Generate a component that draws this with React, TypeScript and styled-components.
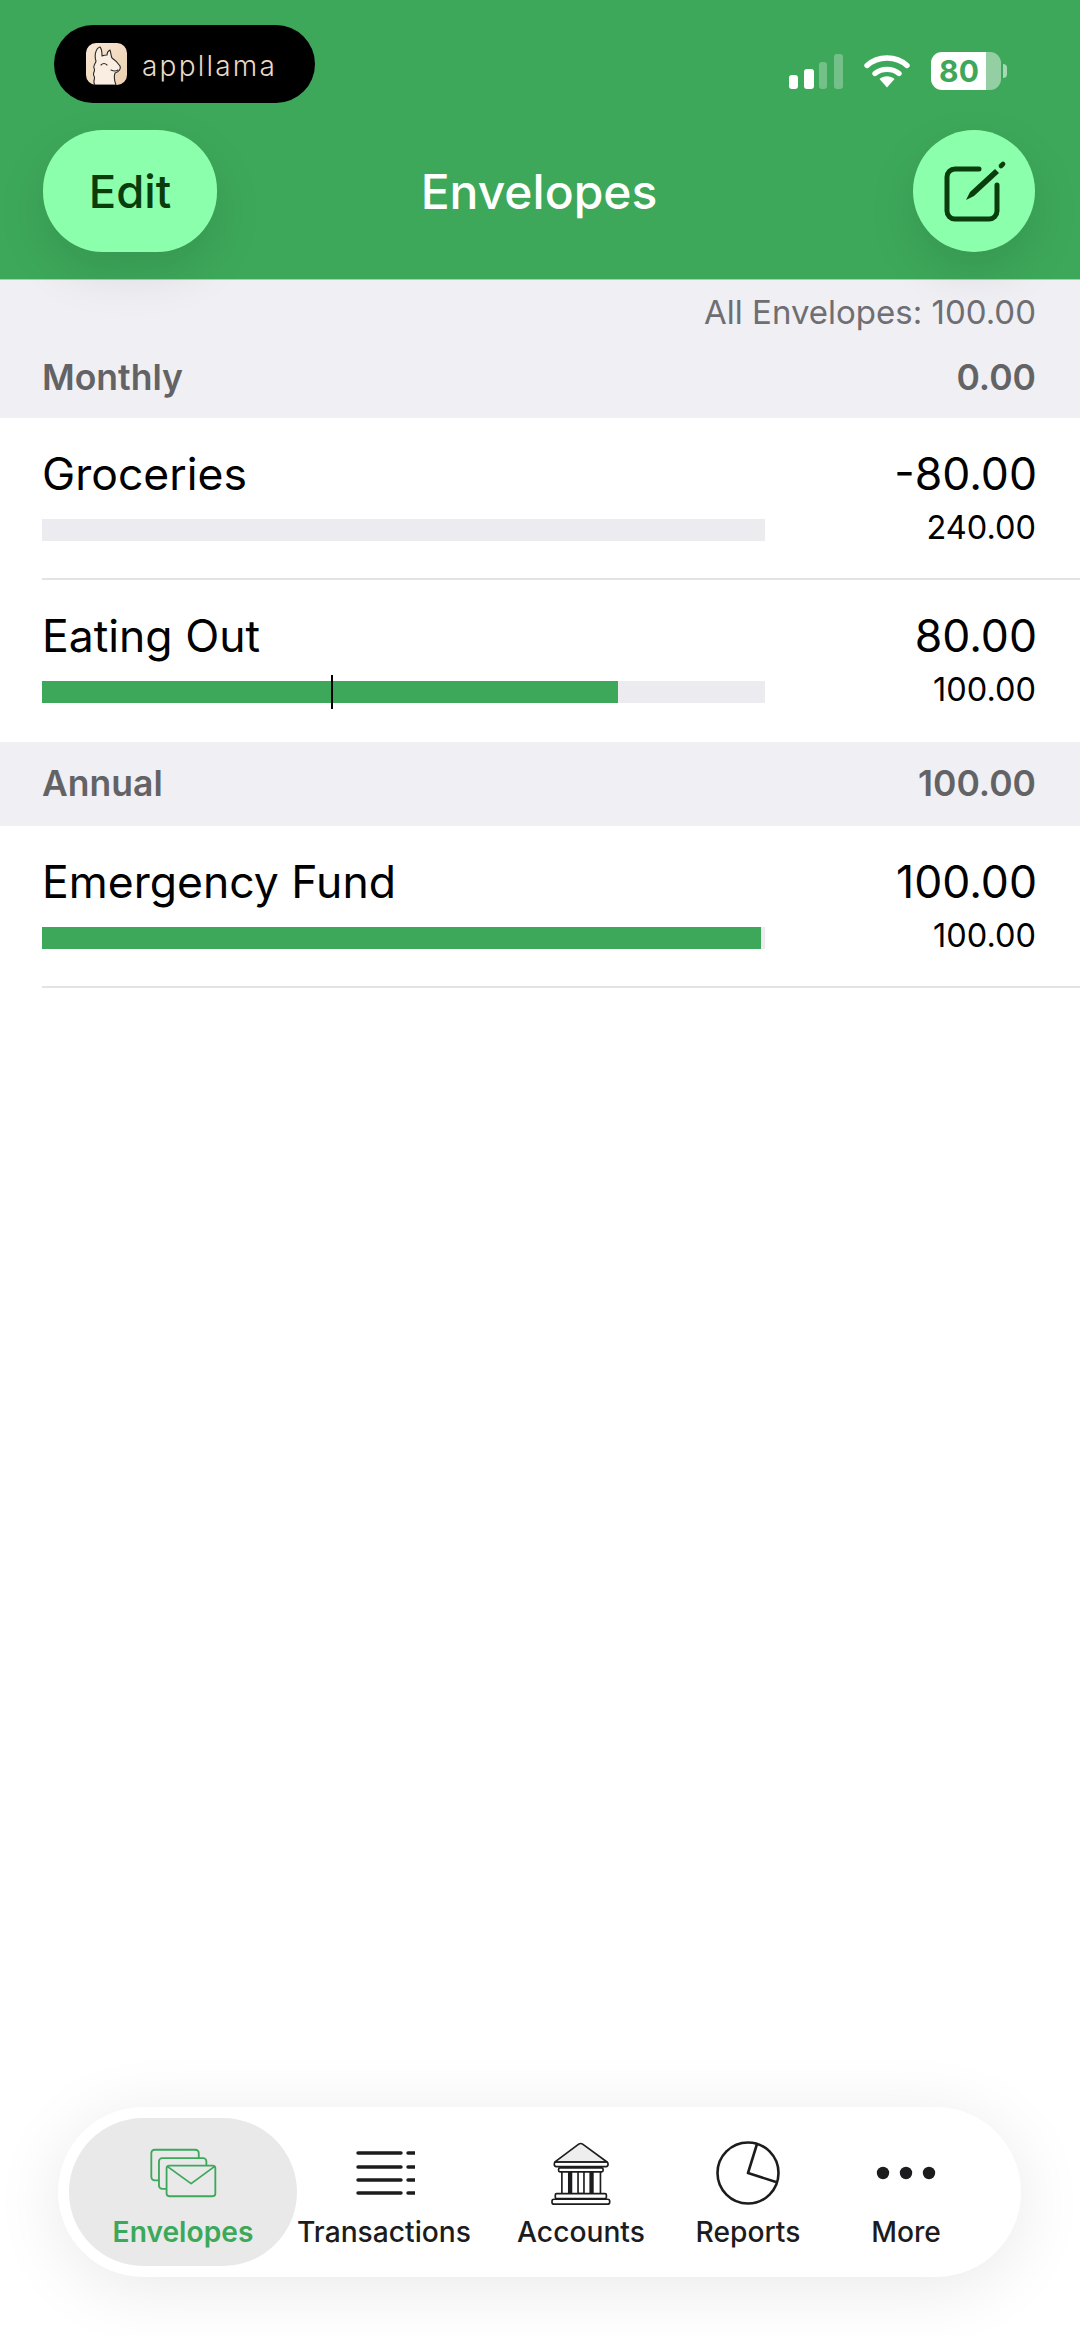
import styled, { createGlobalStyle } from 'styled-components';

const GREEN = '#3da85a';
const MINT = '#8cffac';
const DARK_GREEN = '#0a3d0c';

const GlobalStyle = createGlobalStyle`
  html, body {
    margin: 0;
    padding: 0;
    background: #fff;
    font-family: Inter, "Liberation Sans", sans-serif;
  }
`;

type Envelope = {
  name: string;
  balance: string;
  budget: string;
  fill: number;
  marker?: number;
  last?: boolean;
};

type Section = { title: string; total: string; rows: Envelope[] };

const sections: Section[] = [
  {
    title: 'Monthly',
    total: '0.00',
    rows: [
      { name: 'Groceries', balance: '-80.00', budget: '240.00', fill: 0 },
      { name: 'Eating Out', balance: '80.00', budget: '100.00', fill: 79.6, marker: 40, last: true },
    ],
  },
  {
    title: 'Annual',
    total: '100.00',
    rows: [{ name: 'Emergency Fund', balance: '100.00', budget: '100.00', fill: 99.5 }],
  },
];

const LlamaIcon = () => (
  <svg width="41" height="42" viewBox="0 0 41 42">
    <defs>
      <linearGradient id="llamaBg" x1="0" y1="0" x2="1" y2="1">
        <stop offset="0" stopColor="#f8e8d6" />
        <stop offset="1" stopColor="#eccfae" />
      </linearGradient>
    </defs>
    <rect width="41" height="42" rx="10" fill="url(#llamaBg)" />
    <path
      d="M9 42 C6 38 10 36 8 33 C6 30 10 28 8 25 C7 22 10 20 10 18 C8 12 10 5 14 4 C16 6 16 10 16 13 C18 12 20 12 21 12 C21 10 22 8 24 7 C25 10 25 13 26 15 C29 17 32 20 34 23 C35 26 33 29 29 30 C28 33 28 37 30 42 Z"
      fill="#f9eee1"
      stroke="#2b2a28"
      strokeWidth="1.1"
      strokeLinejoin="round"
    />
    <path d="M15 22 Q18 19 21 22 M25 27 Q29 29 32 27" fill="none" stroke="#2b2a28" strokeWidth="1.1" strokeLinecap="round" />
  </svg>
);

const SignalIcon = () => (
  <svg width="54" height="35" viewBox="0 0 54 35">
    <rect x="0" y="21" width="9" height="14" rx="3" fill="#fff" />
    <rect x="15" y="15" width="10" height="20" rx="3" fill="#fff" />
    <rect x="30" y="8" width="8" height="27" rx="3" fill="#fff" fillOpacity="0.28" />
    <rect x="45" y="0" width="9" height="35" rx="3" fill="#fff" fillOpacity="0.28" />
  </svg>
);

const WifiIcon = () => (
  <svg width="46" height="34" viewBox="0 0 46 34" fill="none">
    <path d="M3 11.5 C14 1.5 32 1.5 43 11.5" stroke="#fff" strokeWidth="5.4" strokeLinecap="round" />
    <path d="M11 19.5 C17.5 14 28.5 14 35 19.5" stroke="#fff" strokeWidth="5.4" strokeLinecap="round" />
    <path d="M15.5 25 C20 21.4 26 21.4 30.5 25 L23 33.5 Z" fill="#fff" />
  </svg>
);

const ComposeIcon = () => (
  <svg width="70" height="64" viewBox="-2 -1 70 64" fill="none">
    <path
      d="M38 9 H14 a8 8 0 0 0 -8 8 V51 a8 8 0 0 0 8 8 H48 a8 8 0 0 0 8 -8 V25"
      stroke={DARK_GREEN}
      strokeWidth="5"
      strokeLinecap="round"
    />
    <path d="M25 40 L29 32 L54 9 L58 13 L33 36 Z" fill={DARK_GREEN} />
    <path d="M60 6 L62 4" stroke={DARK_GREEN} strokeWidth="4.6" strokeLinecap="round" />
  </svg>
);

const EnvelopesIcon = () => (
  <svg width="68" height="50" viewBox="55 55 205 150" fill="none" stroke={GREEN} strokeWidth="5.5" strokeLinejoin="round">
    <path d="M85 152 H72 a10 10 0 0 1 -10 -10 V70 a10 10 0 0 1 10 -10 H195 a10 10 0 0 1 10 10 V85" />
    <path d="M108 178 H95 a10 10 0 0 1 -10 -10 V95 a10 10 0 0 1 10 -10 H218 a10 10 0 0 1 10 10 V108" />
    <rect x="108" y="108" width="147" height="92" rx="8" />
    <path d="M110 110 L182 162 L253 110" />
  </svg>
);

const TransactionsIcon = () => (
  <svg width="62" height="46" viewBox="-3 0 62 46" stroke="#1c1c1e" strokeWidth="3.4" strokeLinecap="round">
    {[3, 17, 30, 43].map((y) => (
      <g key={y}>
        <path d={`M2 ${y} H45`} />
        <path d={`M52 ${y} H59`} />
      </g>
    ))}
  </svg>
);

const AccountsIcon = () => (
  <svg width="60" height="63" viewBox="62 34 182 190" fill="none" stroke="#1c1c1e" strokeWidth="5">
    <path d="M74 94 L146 40 Q152 36 158 40 L232 94 Z" fill="#eeeeee" strokeLinejoin="round" />
    <rect x="72" y="94" width="163" height="14" rx="6" />
    <rect x="85" y="112" width="135" height="12" rx="4" />
    <path d="M95 124 V190 M212 124 V190" />
    <path d="M120 124 V190 M185 124 V190" strokeWidth="13" />
    <path d="M144 124 V190 H162 V124" />
    <rect x="75" y="190" width="155" height="15" rx="4" fill="#fff" />
    <rect x="65" y="207" width="175" height="15" rx="6" fill="#fff" />
  </svg>
);

const ReportsIcon = () => (
  <svg width="64" height="64" viewBox="0 0 64 64" fill="none" stroke="#1c1c1e" strokeWidth="2.6" strokeLinejoin="round">
    <circle cx="32" cy="32" r="30.5" />
    <path d="M41 3 L32 32 L60 41" />
  </svg>
);

const MoreIcon = () => (
  <svg width="60" height="14" viewBox="0 0 60 14" fill="#1c1c1e">
    <circle cx="7" cy="7" r="6.2" />
    <circle cx="30" cy="7" r="6.2" />
    <circle cx="53" cy="7" r="6.2" />
  </svg>
);

const tabs = [
  { label: 'Envelopes', icon: <EnvelopesIcon />, active: true },
  { label: 'Transactions', icon: <TransactionsIcon /> },
  { label: 'Accounts', icon: <AccountsIcon /> },
  { label: 'Reports', icon: <ReportsIcon /> },
  { label: 'More', icon: <MoreIcon /> },
];

const App = () => {
  return (
    <Page>
      <GlobalStyle />
      <Header>
        <TopRow>
          <AppPill>
            <LlamaIcon />
            <AppName>appllama</AppName>
          </AppPill>
          <StatusIcons>
            <SignalIcon />
            <WifiIcon />
            <Battery>80</Battery>
          </StatusIcons>
        </TopRow>
        <NavRow>
          <EditButton>Edit</EditButton>
          <Title>Envelopes</Title>
          <ComposeButton>
            <ComposeIcon />
          </ComposeButton>
        </NavRow>
      </Header>

      <Content>
        <AllTotal>All Envelopes: 100.00</AllTotal>
        {sections.map((section, i) => (
          <div key={section.title}>
            <SectionHead $first={i === 0}>
              <span>{section.title}</span>
              <span>{section.total}</span>
            </SectionHead>
            {section.rows.map((row) => (
              <Row key={row.name}>
                <RowInner $last={row.last}>
                  <div>
                    <Name>{row.name}</Name>
                    <Track>
                      <Fill style={{ width: `${row.fill}%` }} />
                      {row.marker !== undefined && <Marker style={{ left: `${row.marker}%` }} />}
                    </Track>
                  </div>
                  <Amounts>
                    <Balance>{row.balance}</Balance>
                    <Budget>{row.budget}</Budget>
                  </Amounts>
                </RowInner>
              </Row>
            ))}
          </div>
        ))}
      </Content>

      <TabBar>
        {tabs.map((tab) => (
          <Tab key={tab.label} $active={tab.active}>
            <TabIcon>{tab.icon}</TabIcon>
            <TabLabel $active={tab.active}>{tab.label}</TabLabel>
          </Tab>
        ))}
      </TabBar>
    </Page>
  );
};

export default App;

const Page = styled.div`
  display: flex;
  flex-direction: column;
  width: 1080px;
  height: 2336px;
  overflow: hidden;
  background: #fff;
`;

const Header = styled.header`
  position: relative;
  z-index: 1;
  height: 279px;
  flex-shrink: 0;
  background: ${GREEN};
  border-bottom: 1px solid #a9cdb3;
`;

const TopRow = styled.div`
  display: flex;
  justify-content: space-between;
  padding: 25px 79px 0 54px;
`;

const AppPill = styled.div`
  display: flex;
  align-items: center;
  gap: 15px;
  width: 261px;
  height: 78px;
  box-sizing: border-box;
  padding-left: 32px;
  background: #000;
  border-radius: 39px;
`;

const AppName = styled.span`
  font-size: 28px;
  font-weight: 300;
  letter-spacing: 2.2px;
  color: #e9d9c6;
  padding-top: 4px;
`;

const StatusIcons = styled.div`
  display: flex;
  align-items: center;
  height: 38px;
  padding-top: 27px;
  gap: 21px;
`;

const Battery = styled.div`
  position: relative;
  width: 70px;
  height: 38px;
  box-sizing: border-box;
  padding-right: 14px;
  text-align: center;
  font-size: 30px;
  font-weight: 700;
  line-height: 38px;
  color: ${GREEN};
  border-radius: 11px;
  background: linear-gradient(to right, #fff 78.5%, rgba(255, 255, 255, 0.45) 78.5%);

  &::after {
    content: '';
    position: absolute;
    top: 12px;
    right: -6px;
    width: 4px;
    height: 14px;
    border-radius: 0 7px 7px 0;
    background: rgba(255, 255, 255, 0.55);
  }
`;

const NavRow = styled.div`
  display: grid;
  grid-template-columns: 1fr auto 1fr;
  align-items: center;
  height: 122px;
  margin-top: 27px;
  padding: 0 45px 0 43px;
`;

const EditButton = styled.div`
  justify-self: start;
  display: flex;
  align-items: center;
  justify-content: center;
  width: 174px;
  height: 122px;
  border-radius: 60px;
  background: ${MINT};
  box-shadow: 0 20px 50px rgba(0, 0, 0, 0.1);
  font-size: 45.5px;
  font-weight: 500;
  color: ${DARK_GREEN};
`;

const Title = styled.h1`
  margin: 0;
  font-size: 48px;
  font-weight: 500;
  color: #fff;
`;

const ComposeButton = styled.div`
  justify-self: end;
  display: flex;
  align-items: center;
  justify-content: center;
  width: 122px;
  height: 122px;
  border-radius: 50%;
  background: ${MINT};
  box-shadow: 0 20px 50px rgba(0, 0, 0, 0.1);
`;

const Content = styled.main`
  flex: 1;
`;

const AllTotal = styled.div`
  height: 62px;
  padding: 12px 44px 0 0;
  box-sizing: border-box;
  text-align: right;
  font-size: 33px;
  line-height: 40px;
  color: #6e6e73;
  background: #efeff4;
`;

const SectionHead = styled.div<{ $first?: boolean }>`
  display: flex;
  justify-content: space-between;
  align-items: center;
  height: ${(p) => (p.$first ? 76 : 84)}px;
  padding: 0 44px ${(p) => (p.$first ? 6 : 2)}px 42px;
  box-sizing: border-box;
  font-size: 35.5px;
  font-weight: 600;
  color: #636366;
  background: #efeff4;
`;

const Row = styled.div`
  padding-left: 42px;
`;

const RowInner = styled.div<{ $last?: boolean }>`
  display: flex;
  justify-content: space-between;
  box-sizing: border-box;
  height: 162px;
  padding: 29px 44px 0 0;
  border-bottom: ${(p) => (p.$last ? 'none' : '2px solid #e3e3e5')};
`;

const Name = styled.div`
  font-size: 44.5px;
  line-height: 54px;
  color: #000;
`;

const Track = styled.div`
  position: relative;
  width: 723px;
  height: 22px;
  margin-top: 18px;
  background: #ececf0;
`;

const Fill = styled.div`
  height: 100%;
  background: ${GREEN};
`;

const Marker = styled.div`
  position: absolute;
  top: -6px;
  width: 2px;
  height: 34px;
  background: #000;
`;

const Amounts = styled.div`
  text-align: right;
`;

const Balance = styled.div`
  margin-right: -1px;
  font-size: 44.5px;
  line-height: 54px;
  color: #000;
`;

const Budget = styled.div`
  margin-top: 7px;
  font-size: 32.5px;
  line-height: 40px;
  color: #000;
`;

const TabBar = styled.nav`
  display: grid;
  grid-template-columns: 228px 174px 220px 114px 202px;
  align-items: center;
  flex-shrink: 0;
  width: 963px;
  height: 170px;
  box-sizing: border-box;
  margin: 0 0 59px 58px;
  padding: 0 11px;
  background: #fff;
  border-radius: 85px;
  box-shadow: 0 10px 70px rgba(0, 0, 0, 0.09);
`;

const Tab = styled.div<{ $active?: boolean }>`
  display: flex;
  flex-direction: column;
  align-items: center;
  height: 148px;
  box-sizing: border-box;
  padding-top: 23px;
  border-radius: 74px;
  background: ${(p) => (p.$active ? '#e9e9e9' : 'transparent')};
`;

const TabIcon = styled.div`
  display: flex;
  align-items: center;
  justify-content: center;
  height: 64px;
`;

const TabLabel = styled.span<{ $active?: boolean }>`
  margin-top: 9px;
  font-size: 28.2px;
  line-height: 36px;
  white-space: nowrap;
  font-weight: ${(p) => (p.$active ? 600 : 500)};
  color: ${(p) => (p.$active ? GREEN : '#1c1c1e')};
`;
